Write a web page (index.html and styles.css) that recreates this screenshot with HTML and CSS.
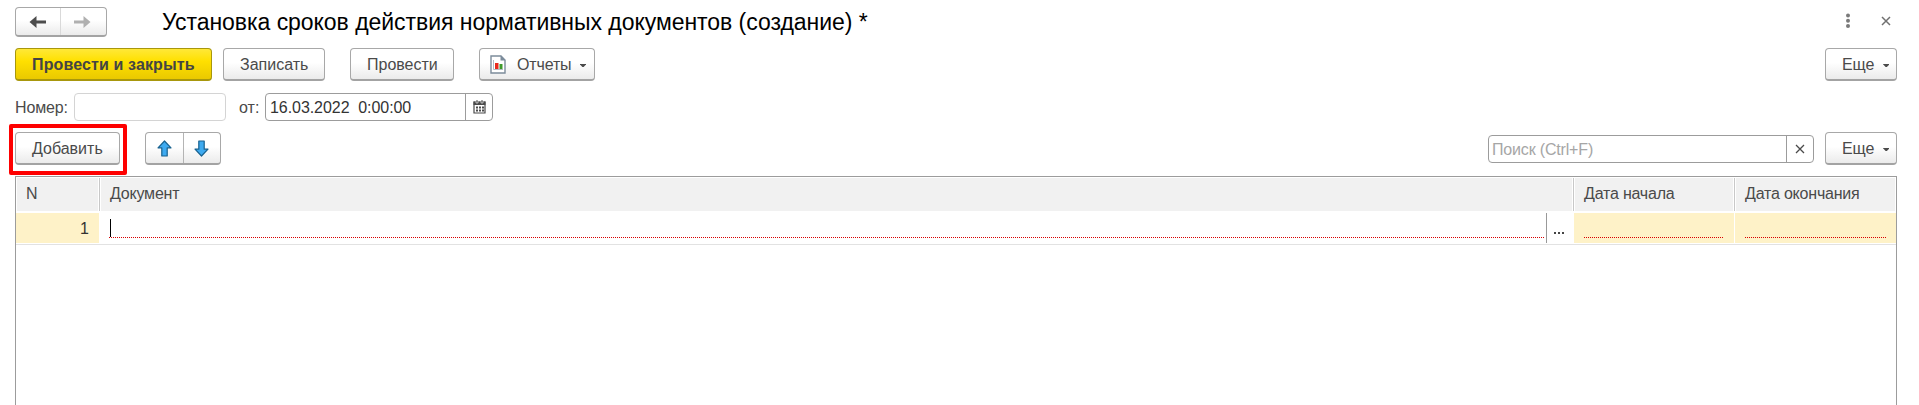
FILE: index.html
```html
<!DOCTYPE html>
<html lang="ru">
<head>
<meta charset="utf-8">
<title>Установка сроков действия нормативных документов</title>
<link rel="stylesheet" href="styles.css">
</head>
<body>
<main class="window">
  <header class="titlebar">
    <div class="group nav">
      <button class="seg"><svg width="18" height="14" viewBox="0 0 18 14"><path d="M0.5 7 7.5 1V5.5H17V8.5H7.5V13Z" fill="#4d4d4d"/></svg></button>
      <button class="seg"><svg width="18" height="14" viewBox="0 0 18 14"><path d="M17.5 7 10.5 1V5.5H1V8.5H10.5V13Z" fill="#b0b0b0"/></svg></button>
    </div>
    <h1 class="title">Установка сроков действия нормативных документов (создание) *</h1>
    <div class="window-tools">
      <svg width="6" height="16" viewBox="0 0 6 16" fill="#7a7a7a"><circle cx="3" cy="2.5" r="2"/><circle cx="3" cy="7.8" r="2"/><circle cx="3" cy="13" r="2"/></svg>
      <svg width="10" height="10" viewBox="0 0 10 10"><path d="M1 1 9 9M9 1 1 9" stroke="#707070" stroke-width="1.5"/></svg>
    </div>
  </header>

  <div class="commands">
    <button class="btn primary">Провести и закрыть</button>
    <button class="btn save">Записать</button>
    <button class="btn post">Провести</button>
    <button class="btn reports">
      <svg width="16" height="19" viewBox="0 0 16 19"><path d="M1 1H11L15 5V18H1Z" fill="#fff" stroke="#7c8c9b" stroke-width="1.4"/><path d="M10.5 .5 15.5 5.5H10.5Z" fill="#7c8c9b"/><path d="M3.5 5V14.5H13" fill="none" stroke="#b4bcc4"/><path d="M5 8H8.5V14H5Z" fill="#e8291c"/><path d="M9.5 9H12.5V14H9.5Z" fill="#3f9a2c"/></svg>
      <span>Отчеты</span><i class="caret"></i>
    </button>
    <button class="btn more">Еще<i class="caret"></i></button>
  </div>

  <div class="fields">
    <label class="number-label">Номер:</label>
    <div class="field number"></div>
    <label class="date-label">от:</label>
    <div class="field date">
      <span class="value">16.03.2022&nbsp; 0:00:00</span>
      <button class="field-btn"><svg width="13" height="14" viewBox="0 0 13 14"><path d="M1 2H12V13H1Z" fill="#fff" stroke="#4a4a4a" stroke-width="1.2"/><path d="M.5 1.5H12.5V5H.5Z" fill="#4a4a4a"/><path d="M3 0H5V3H3ZM8 0H10V3H8Z" fill="#4a4a4a" stroke="#fff" stroke-width=".6"/><path d="M3 6.5H5V8.5H3ZM6 6.5H8V8.5H6ZM9 6.5H11V8.5H9ZM3 9.5H5V11.5H3ZM6 9.5H8V11.5H6ZM9 9.5H11V11.5H9Z" fill="#4a4a4a"/></svg></button>
    </div>
  </div>

  <div class="list-tools">
    <div class="add-wrap"><button class="btn add">Добавить</button></div>
    <div class="group move">
      <button class="seg"><svg width="15" height="17" viewBox="0 0 15 17"><path d="M7.5 1 14 7.8H10.2V16H4.8V7.8H1Z" fill="#3eaaf0" stroke="#17618f" stroke-width="1.2" stroke-linejoin="round"/></svg></button>
      <button class="seg"><svg width="15" height="17" viewBox="0 0 15 17"><path d="M7.5 16 14 9.2H10.2V1H4.8V9.2H1Z" fill="#3eaaf0" stroke="#17618f" stroke-width="1.2" stroke-linejoin="round"/></svg></button>
    </div>
    <div class="field search">
      <span class="value">Поиск (Ctrl+F)</span>
      <button class="field-btn"><svg width="10" height="10" viewBox="0 0 10 10"><path d="M1 1 9 9M9 1 1 9" stroke="#4a4a4a" stroke-width="1.3"/></svg></button>
    </div>
    <button class="btn more">Еще<i class="caret"></i></button>
  </div>

  <section class="table">
    <div class="thead">
      <div class="th n">N</div>
      <div class="th doc">Документ</div>
      <div class="th start">Дата начала</div>
      <div class="th end">Дата окончания</div>
    </div>
    <div class="row">
      <div class="td num">1</div>
      <div class="td editor">
        <div class="required"><i class="cursor"></i></div>
        <button class="pick"><i></i><i></i><i></i></button>
      </div>
      <div class="td empty"><div class="required"></div></div>
      <div class="td empty last"><div class="required"></div></div>
    </div>
  </section>
</main>
</body>
</html>
```
FILE: styles.css
```css
* { box-sizing: border-box; }
body {
  margin: 0;
  background: #fff;
  color: #4a4a4a;
  font: 16px/20px "Liberation Sans", Arial, sans-serif;
}
button { font: inherit; color: inherit; letter-spacing: inherit; margin: 0; padding: 0; border: 0; background: none; white-space: nowrap; }
svg { display: block; flex: none; }

.window {
  display: flex;
  flex-direction: column;
  height: 405px;
  padding: 7px 22px 0 15px;
  overflow: hidden;
}

.titlebar { display: flex; height: 30px; }
.group {
  display: flex;
  border: 1px solid #a8a8a8;
  border-bottom: 2px solid #a3a3a3;
  border-radius: 4px;
  background: linear-gradient(#fff 45%, #ebebeb);
}
.seg { flex: 1; display: flex; align-items: center; justify-content: center; padding-top: 1px; }
.seg + .seg { border-left: 1px solid #b4b4b4; }
.nav { width: 92px; }
.nav .seg + .seg { border-left-color: #d9d9d9; padding-right: 2px; }
.title {
  margin: 0 0 0 55px;
  color: #000;
  font-size: 23px;
  font-weight: 400;
  line-height: 30px;
  letter-spacing: -0.045px;
  white-space: nowrap;
}
.window-tools { display: flex; gap: 30px; align-items: center; height: 27px; margin-left: auto; padding-right: 6px; }

.commands { display: flex; height: 33px; margin-top: 11px; }
.btn {
  display: flex;
  align-items: center;
  height: 33px;
  padding: 1px 0 0 16px;
  border: 1px solid #a8a8a8;
  border-bottom: 2px solid #a3a3a3;
  border-radius: 4px;
  background: linear-gradient(#fff 45%, #ebebeb);
}
.primary {
  width: 197px;
  color: #444;
  font-weight: 700;
  letter-spacing: 0.13px;
  border-color: #a8970c;
  background: linear-gradient(#ffe838, #ffe000 40%, #eac900);
}
.save { width: 102px; margin-left: 11px; }
.post { width: 104px; margin-left: 25px; }
.reports { width: 116px; margin-left: 25px; padding-left: 10px; }
.reports span { width: 54px; margin-left: 11px; letter-spacing: -0.15px; }
.caret {
  flex: none;
  width: 6px;
  height: 3px;
  margin: 2px 0 0 9px;
  background: #4a4a4a;
  clip-path: polygon(0 0, 100% 0, 100% 20%, 60% 100%, 40% 100%, 0 20%);
}
.commands .more { margin-left: auto; }
.more { width: 72px; padding-left: 16px; letter-spacing: -0.1px; }

.fields { display: flex; height: 28px; margin-top: 12px; line-height: 30px; }
.number-label { width: 59px; letter-spacing: -0.15px; }
.date-label { width: 26px; margin-left: 13px; }
.field { display: flex; border: 1px solid #9c9c9c; border-radius: 4px; line-height: 28px; white-space: pre; }
.number { width: 152px; border-color: #d4d4d4; }
.date { width: 228px; color: #333; letter-spacing: -0.06px; }
.field .value { flex: 1; padding-left: 4px; }
.field-btn { display: flex; width: 27px; align-items: center; justify-content: center; border-left: 1px solid #9c9c9c; }

.list-tools { display: flex; height: 33px; margin-top: 11px; }
.add-wrap {
  height: 51px;
  width: 118px;
  margin: -8px 0 0 -6px;
  padding: 4px 2px;
  border: 4px solid #fe0000;
  border-radius: 2px;
}
.add { width: 105px; margin-left: 0; }
.move { width: 76px; margin-left: 18px; }
.search { width: 326px; height: 28px; margin: 3px 11px 0 auto; color: #a6a6a6; letter-spacing: -0.17px; }
.search .value { padding-left: 3px; }

.table { flex: 1; margin-top: 11px; border: 1px solid #9c9c9c; border-bottom: 0; }
.thead, .row { display: grid; grid-template-columns: 84px 1474px 161px 1fr; }
.thead { height: 35px; border-bottom: 1px solid #c8c8c8; letter-spacing: -0.2px; }
.th {
  padding: 0 0 2px 9px;
  border: 1px solid #fff;
  border-right: 0;
  line-height: 31px;
  background: #f1f1f1;
  box-shadow: inset -1px 0 #c8c8c8, inset -2px 0 #fff;
}
.th.end { box-shadow: none; border-right: 1px solid #fff; }
.row { height: 33px; padding: 1px 0; border-bottom: 1px solid #e2e2e2; }
.td { display: flex; height: 30px; }
.num { justify-content: flex-end; padding-right: 10px; margin-right: 1px; line-height: 31px; color: #333; background: #fef2c8; }
.editor { padding-left: 9px; }
.required {
  flex: 1;
  height: 25px;
  background: repeating-linear-gradient(90deg, #d80000 0 1px, transparent 1px 2px) 0 100% / 100% 1px no-repeat;
}
.cursor { display: block; width: 1px; height: 18px; margin: 6px 0 0 1px; background: #000; }
.pick { display: flex; gap: 2px; align-items: center; width: 28px; margin-left: 2px; padding: 9px 0 0 7px; border-left: 1px solid #999; }
.pick i { width: 2px; height: 2px; background: #444; }
.empty { margin-right: 1px; padding: 0 10px; background: #fef2c8; }
.empty.last { margin-right: 0; }
```
